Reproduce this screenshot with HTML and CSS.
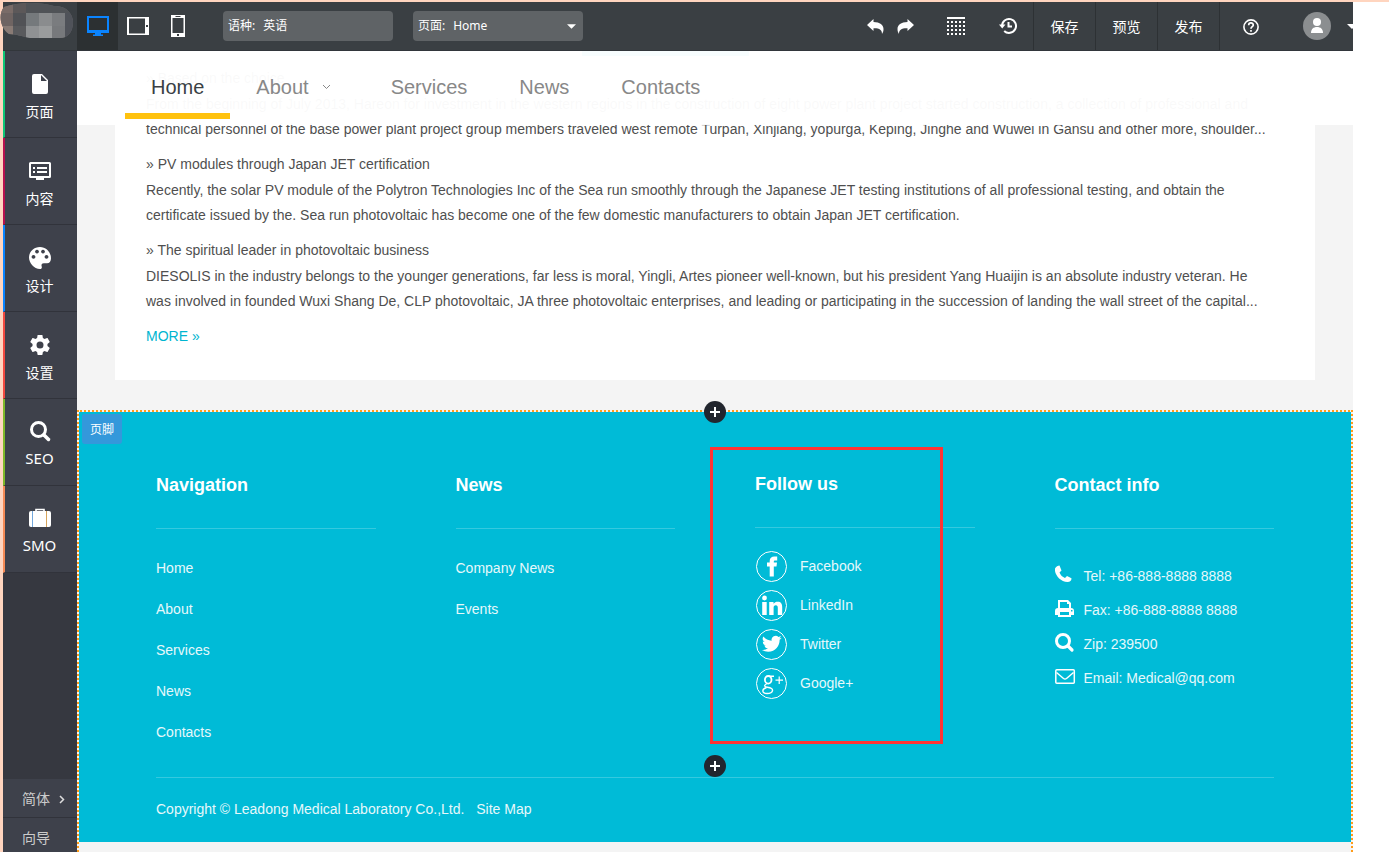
FILE: index.html
```html
<!DOCTYPE html>
<html lang="en">
<head>
<meta charset="utf-8">
<title>Site editor</title>
<link rel="stylesheet" href="styles.css">
</head>
<body>
<div class="app">
  <header class="topbar">
    <div class="logo">
      <svg width="78" height="40" viewBox="0 0 78 40" aria-hidden="true">
        <defs><clipPath id="blob"><path d="M4 5C18 0 40 0 54 4C66 3 73 12 73 20C73 30 68 36 60 36H30C24 35 16 32 9 32C0 26 -2 12 4 5Z"/></clipPath></defs>
        <g clip-path="url(#blob)">
          <path fill="#69676a" d="M0 0h78v40H0z"/>
          <path fill="#7a6c68" d="M0 0h13v11H0z"/><path fill="#5c5859" d="M13 0h13v11H13z"/><path fill="#505357" d="M26 0h52v11H26z"/>
          <path fill="#6f6462" d="M0 11h13v13H0z"/><path fill="#515256" d="M13 11h13v13H13z"/>
          <path fill="#75797c" d="M26 11h13v13H26z"/><path fill="#8a8c8e" d="M39 11h13v13H39z"/><path fill="#7a7c7f" d="M52 11h13v13H52z"/><path fill="#4f5259" d="M65 11h13v27H65z"/>
          <path fill="#897b75" d="M0 24h13v15H0z"/><path fill="#595a5d" d="M13 24h13v15H13z"/><path fill="#8f9193" d="M26 24h13v15H26z"/><path fill="#9a9c9d" d="M39 24h13v15H39z"/><path fill="#77797c" d="M52 24h13v15H52z"/>
        </g>
      </svg>
    </div>
    <div class="devices">
      <button class="device device-active" aria-label="Desktop">
        <svg width="22" height="20" viewBox="0 0 22 20"><path fill="#0a84ff" fill-rule="evenodd" d="M0 0h22v17h-8v1.500h2V20H6v-1.500h2V17H0zM2 2v12h18V2z"/></svg>
      </button>
      <button class="device" aria-label="Tablet">
        <svg width="22" height="18" viewBox="0 0 22 18"><path fill="#fff" fill-rule="evenodd" d="M0 0h22v18H0zM2 1.500v15h16v-15zM19 8v2h2V8z"/></svg>
      </button>
      <button class="device" aria-label="Phone">
        <svg width="14" height="22" viewBox="0 0 14 22"><path fill="#fff" fill-rule="evenodd" d="M0 0h14v22H0zM1.500 3v15h11V3zM4.500 1v1h5V1zM6 19v2h2v-2z"/></svg>
      </button>
    </div>
    <div class="pickers">
      <label class="picker"><span>语种:</span><select><option>英语</option></select></label>
      <label class="picker"><span>页面:</span><select><option>Home</option></select><svg class="picker-caret" width="9" height="5" viewBox="0 0 10 5"><path fill="#fff" d="M0 0h10L5 5z"/></svg></label>
    </div>
    <div class="tools">
      <button class="tool tool-history" aria-label="Undo"><svg width="17" height="15" viewBox="0 0 17 15"><path fill="#fff" d="M6.500 0v3C13 3 16.500 6 16.500 10c0 2-.5 3.500-1.500 5 .2-4-2.500-6-8.500-5.800V12L0 6z"/></svg></button>
      <button class="tool tool-history" aria-label="Redo"><svg width="17" height="15" viewBox="0 0 17 15"><path fill="#fff" d="M10.500 0v3C4 3 .5 6 .5 10c0 2 .5 3.500 1.500 5-.2-4 2.500-6 8.500-5.800V12L17 6z"/></svg></button>
      <button class="tool tool-grid" aria-label="Grid"><svg width="18" height="18" viewBox="0 0 18 18"><path stroke="#fff" stroke-width="2" d="M0 1h18"/><path stroke="#fff" stroke-width="2" stroke-dasharray="2 2" d="M0 5h18M0 9h18M0 13h18M0 17h18"/></svg></button>
      <button class="tool tool-recent" aria-label="History"><svg width="18" height="18" viewBox="0 0 18 18" fill="none" stroke="#fff" stroke-width="2"><path d="M3 9a7 7 0 1 1 2.200 5"/><path d="M9.500 5v4.500H13"/><path fill="#fff" stroke="none" d="M0 7.500h6.500L3.200 11.500z"/></svg></button>
      <button class="action">保存</button>
      <button class="action">预览</button>
      <button class="action">发布</button>
      <button class="action" aria-label="Help"><svg width="16" height="16" viewBox="0 0 16 16" fill="none" stroke="#fff"><circle cx="8" cy="8" r="7.100" stroke-width="1.600"/><path stroke-width="1.700" d="M5.700 6.200C5.700 3.200 10.300 3.300 10.300 6c0 1.700-2.300 1.700-2.300 3.700M8 11v1.700"/></svg></button>
      <button class="account" aria-label="Account"><svg width="28" height="28" viewBox="0 0 28 28"><circle cx="14" cy="14" r="14" fill="#8b8e90"/><circle cx="14" cy="10" r="4" fill="#fff"/><path fill="#fff" d="M8 21c0-4 2.500-6 6-6s6 2 6 6z"/></svg><svg class="account-caret" width="10" height="5" viewBox="0 0 10 5"><path fill="#fff" d="M0 0h10L5 5z"/></svg></button>
    </div>
  </header>

  <div class="workspace">
    <aside class="sidebar">
      <button class="side-item green"><svg width="22" height="24" viewBox="0 0 22 24"><path fill="#fff" fill-rule="evenodd" d="M5 2h8l6 6v12q0 2-2 2H5q-2 0-2-2V4q0-2 2-2zM12 3v6h6z"/></svg><span>页面</span></button>
      <button class="side-item crimson"><svg width="22" height="24" viewBox="0 0 22 24"><path fill="#fff" fill-rule="evenodd" d="M1.500 3h19Q22 3 22 4.500v13q0 1.500-1.500 1.500H15v2H7v-2H1.500Q0 19 0 17.500v-13Q0 3 1.500 3zM2 5v12h18V5zM4 8h2v2H4zM8 8h10v2H8zM4 12h2v2H4zM8 12h10v2H8z"/></svg><span>内容</span></button>
      <button class="side-item blue"><svg width="22" height="24" viewBox="0 0 22 24"><path fill="#fff" fill-rule="evenodd" d="M11 1C4.500 1 0 6 0 11.500S5 23 11 23c1.500 0 2-1 1.800-2.300-.8-2 0-3.500 2-3.500H18c2.500 0 4-2 4-5C22 6 17 1 11 1zM4.500 9a1.900 1.900 0 1 0 .01 0zM8 3.700a1.900 1.900 0 1 0 .01 0zM14 3.700a1.900 1.900 0 1 0 .01 0zM17.500 9a1.900 1.900 0 1 0 .01 0z"/></svg><span>设计</span></button>
      <button class="side-item red"><svg width="24" height="24" viewBox="0 0 24 24"><path fill="#fff" d="M19.430 12.980c.04-.32.07-.64.07-.98s-.03-.66-.07-.98l2.110-1.650c.19-.15.24-.42.12-.64l-2-3.460c-.12-.22-.39-.3-.61-.22l-2.490 1c-.52-.4-1.080-.73-1.690-.98l-.38-2.650C14.460 2.180 14.250 2 14 2h-4c-.25 0-.46.18-.49.42l-.38 2.650c-.61.25-1.170.59-1.690.98l-2.490-1c-.23-.09-.49 0-.61.22l-2 3.460c-.13.22-.07.49.12.64l2.110 1.650c-.04.32-.07.65-.07.98s.03.66.07.98l-2.110 1.650c-.19.15-.24.42-.12.64l2 3.460c.12.22.39.3.61.22l2.490-1c.52.4 1.080.73 1.690.98l.38 2.650c.03.24.24.42.49.42h4c.25 0 .46-.18.49-.42l.38-2.650c.61-.25 1.170-.59 1.690-.98l2.490 1c.23.09.49 0 .61-.22l2-3.460c.12-.22.07-.49-.12-.64zM12 15.500a3.500 3.500 0 1 1 0-7 3.500 3.500 0 0 1 0 7z"/></svg><span>设置</span></button>
      <button class="side-item latin olive"><svg width="22" height="22" viewBox="0 0 22 22" fill="none" stroke="#fff"><circle cx="9.500" cy="9.500" r="7" stroke-width="3"/><path stroke-width="3.500" stroke-linecap="round" d="m15 15 4.500 4.500"/></svg><span>SEO</span></button>
      <button class="side-item latin orange"><svg width="22" height="22" viewBox="0 0 22 22"><path fill="none" stroke="#fff" stroke-width="1.600" d="M7 5V2.500h8V5"/><rect y="4" width="22" height="16" rx="2" fill="#fff"/><path stroke="#72a7dc" d="M3.500 4v16"/><path stroke="#d7a45c" d="M17.500 4v16"/></svg><span>SMO</span></button>
      <div class="side-bottom">
        <button class="side-link">简体<svg width="6" height="9" viewBox="0 0 6 9"><path fill="none" stroke="#ddd" stroke-width="1.500" d="m1 1 3.500 3.500L1 8"/></svg></button>
        <button class="side-link">向导</button>
      </div>
    </aside>

    <main class="canvas">
      <nav class="site-nav">
        <a class="nav-current" href="#">Home</a>
        <a class="nav-menu" href="#">About<svg width="9" height="6" viewBox="0 0 9 6"><path fill="none" stroke="#888" d="m1 1 3.500 3.500L8 1"/></svg></a>
        <a href="#">Services</a>
        <a href="#">News</a>
        <a href="#">Contacts</a>
      </nav>
      <section class="article-card">
        <div class="accent-bar"></div>
        <h3>» Based on the choice</h3>
        <p>From the beginning of July 2013, Hareon for investment in the western regions in the construction of eight power plant project started construction, a collection of professional and<br>technical personnel of the base power plant project group members traveled west remote Turpan, Xinjiang, yopurga, Keping, Jinghe and Wuwei in Gansu and other more, shoulder...</p>
        <h3>» PV modules through Japan JET certification</h3>
        <p>Recently, the solar PV module of the Polytron Technologies Inc of the Sea run smoothly through the Japanese JET testing institutions of all professional testing, and obtain the<br>certificate issued by the. Sea run photovoltaic has become one of the few domestic manufacturers to obtain Japan JET certification.</p>
        <h3>» The spiritual leader in photovoltaic business</h3>
        <p>DIESOLIS in the industry belongs to the younger generations, far less is moral, Yingli, Artes pioneer well-known, but his president Yang Huaijin is an absolute industry veteran. He<br>was involved in founded Wuxi Shang De, CLP photovoltaic, JA three photovoltaic enterprises, and leading or participating in the succession of landing the wall street of the capital...</p>
        <a class="more" href="#">MORE »</a>
      </section>

      <div class="footer-frame">
        <span class="frame-tag">页脚</span>
        <button class="add add-top" aria-label="Add above"><svg width="12" height="12" viewBox="0 0 12 12"><path stroke="#fff" stroke-width="2" d="M6 1v10M1 6h10"/></svg></button>
        <button class="add add-bottom" aria-label="Add below"><svg width="12" height="12" viewBox="0 0 12 12"><path stroke="#fff" stroke-width="2" d="M6 1v10M1 6h10"/></svg></button>
        <div class="highlight"></div>
        <footer class="site-footer">
          <div class="columns">
            <section>
              <h2>Navigation</h2>
              <ul class="links">
                <li><a href="#">Home</a></li><li><a href="#">About</a></li><li><a href="#">Services</a></li><li><a href="#">News</a></li><li><a href="#">Contacts</a></li>
              </ul>
            </section>
            <section>
              <h2>News</h2>
              <ul class="links">
                <li><a href="#">Company News</a></li><li><a href="#">Events</a></li>
              </ul>
            </section>
            <section class="follow">
              <h2>Follow us</h2>
              <ul class="social">
                <li><a href="#"><svg width="33" height="33" viewBox="0 0 33 33"><circle cx="16.500" cy="16.500" r="15" fill="none" stroke="#fff"/><path fill="#fff" d="M14.700 26.500v-10h-2.700v-4h2.700V11c0-3 1.800-4.500 4.800-4.500h2.700v4h-2c-1 0-1.400.4-1.400 1.300v.7h3.200l-.5 4h-2.700v10z"/></svg>Facebook</a></li>
                <li><a href="#"><svg width="33" height="33" viewBox="0 0 33 33"><circle cx="16.500" cy="16.500" r="15" fill="none" stroke="#fff"/><circle cx="9.500" cy="9" r="2.400" fill="#fff"/><path fill="#fff" d="M7.200 13h4.500v13H7.200zM14.200 13h4.300v1.800c1-1.500 2.400-2.100 4.200-2.100 3.300 0 4.500 2 4.500 5.600V26h-4.400v-7c0-1.700-.5-2.700-2-2.700-1.600 0-2.200 1.100-2.200 2.700v7h-4.400z"/></svg>LinkedIn</a></li>
                <li><a href="#"><svg width="33" height="33" viewBox="0 0 33 33"><circle cx="16.500" cy="16.500" r="15" fill="none" stroke="#fff"/><path fill="#fff" transform="translate(7 5.600) scale(.83)" d="M23.640 4.940a9.700 9.700 0 0 1-2.790.76 4.870 4.870 0 0 0 2.130-2.680 9.700 9.700 0 0 1-3.080 1.170 4.850 4.850 0 0 0-8.260 4.420A13.760 13.760 0 0 1 1.640 3.550a4.850 4.850 0 0 0 1.500 6.470 4.800 4.800 0 0 1-2.190-.6v.06a4.850 4.850 0 0 0 3.890 4.750 4.900 4.900 0 0 1-2.190.08 4.850 4.850 0 0 0 4.530 3.370A9.720 9.720 0 0 1 0 19.690a13.720 13.720 0 0 0 7.430 2.180c8.920 0 13.790-7.390 13.790-13.790l-.01-.63a9.860 9.860 0 0 0 2.430-2.510z"/></svg>Twitter</a></li>
                <li><a href="#"><svg width="33" height="33" viewBox="0 0 33 33" fill="none" stroke="#fff"><circle cx="16.500" cy="16.500" r="15"/><ellipse cx="13.200" cy="12.800" rx="3.300" ry="3.800" stroke-width="1.800"/><path stroke-width="1.400" d="M14 9.200h5M12 16.500c-3.500 1.800-3 3.400.5 3.700 7.500.7 6 6.300-.5 6.300-5.500 0-5.500-4.500-.5-6"/><path stroke-width="1.200" d="M24.200 9.500v7.500M20.500 13.200h7.500"/></svg>Google+</a></li>
              </ul>
            </section>
            <section>
              <h2>Contact info</h2>
              <ul class="contact">
                <li><svg width="22" height="22" viewBox="0 0 22 22"><path fill="#fff" d="M0 3.500C1 1.500 3 .5 4.500.5l2 5L4.500 7.500c1 2.700 3 4.500 5.500 5.500l2-2 4.500 2.300c0 2.500-1.500 3.700-4 3.700C5 17-1 9 0 3.500z"/></svg>Tel: +86-888-8888 8888</li>
                <li><svg width="22" height="22" viewBox="0 0 22 22"><path fill="#fff" fill-rule="evenodd" d="M3 1h10l3 3v5q3 0 3 3v4h-3v2H3v-2H0v-4q0-3 3-3zM5 3v6h9V5h-2V3zM5 13v3h9v-3zM16 11h1.500v1.500H16z"/></svg>Fax: +86-888-8888 8888</li>
                <li><svg width="22" height="22" viewBox="0 0 22 22" fill="none" stroke="#fff"><circle cx="8" cy="8" r="6.500" stroke-width="3"/><path stroke-width="3.200" stroke-linecap="round" d="m13 13 4 4"/></svg>Zip: 239500</li>
                <li><svg width="22" height="22" viewBox="0 0 22 22" fill="none" stroke="#fff" stroke-width="1.500"><rect x=".8" y="2.800" width="18.500" height="13.500" rx="1"/><path d="m1.500 5.500 7 6q1.500 1 3 0l7-6"/></svg>Email: Medical@qq.com</li>
              </ul>
            </section>
          </div>
          <div class="legal">Copyright © Leadong Medical Laboratory Co.,Ltd. <a href="#">Site Map</a></div>
        </footer>
      </div>
    </main>
  </div>
</div>
</body>
</html>
```

FILE: styles.css
```css
* { box-sizing: border-box; }
body {
  margin: 0;
  height: 100vh;
  overflow: hidden;
  border-top: 2px solid #ffd5bf;
  background: #fff;
  font: 14px/25px "Liberation Sans", Arial, sans-serif;
  color: #4f4f4f;
}
a { color: inherit; text-decoration: none; }
button { border: 0; padding: 0; background: none; color: inherit; font: inherit; }
ul { list-style: none; margin: 0; padding: 0; }
svg { display: block; flex: none; }

.app {
  display: flex;
  flex-direction: column;
  height: 100%;
  margin-right: 36px;
  border-left: 3px solid #ffd5bf;
}

/* Editor top bar */
.topbar {
  display: flex;
  flex: none;
  height: 49px;
  background: #3a3f43;
  border-bottom: 1px solid #32363b;
  color: #fff;
  font: 13px/20px "Noto Sans", "Noto Sans CJK SC", sans-serif;
}
.logo { width: 74px; flex: none; }
.logo svg { margin-left: -3px; }
.devices { display: flex; }
.device { display: flex; align-items: center; justify-content: center; width: 40px; }
.device-active { width: 41px; background: #2c3032; }
.pickers { display: flex; align-items: center; gap: 20px; margin-left: 25px; }
.picker {
  display: flex;
  align-items: center;
  gap: 8px;
  width: 170px;
  height: 30px;
  padding: 0 7px 0 5px;
  border-radius: 4px;
  background: #5f6366;
  font-size: 12px;
}
.picker select {
  flex: 1;
  min-width: 0;
  padding: 0;
  border: 0;
  appearance: none;
  background: none;
  color: inherit;
  font: inherit;
}
.picker-caret { pointer-events: none; }
.tools { display: flex; margin-left: auto; overflow: hidden; }
.tool { display: flex; align-items: center; justify-content: center; }
.tool-history { width: 30px; }
.tool-grid { width: 52px; margin-left: 10px; }
.tool-recent { width: 51px; }
.action {
  display: flex;
  align-items: center;
  justify-content: center;
  width: 62px;
  padding-top: 1px;
  border-left: 1px solid #2d3134;
  font-size: 14px;
}
.account { display: flex; align-items: center; gap: 16px; width: 50px; margin-left: 22px; }

/* Sidebar */
.workspace { display: flex; flex: 1; min-height: 0; }
.sidebar {
  display: flex;
  flex: none;
  flex-direction: column;
  width: 74px;
  background: #363840;
  color: #fff;
  font: 14px/20px "Noto Sans", "Noto Sans CJK SC", sans-serif;
}
.side-item {
  display: flex;
  flex: none;
  flex-direction: column;
  align-items: center;
  justify-content: center;
  gap: 6px;
  height: 87px;
  padding: 5px 3px 0 0;
  border-left: 2px solid;
  border-bottom: 1px solid #31333b;
  background: #3e414b;
}
.side-item span { color: #fff; }
.latin { padding-top: 3px; font-size: 15px; }
.green { border-left-color: #0ec776; }
.crimson { border-left-color: #b80f4d; }
.blue { border-left-color: #0a84ff; }
.red { border-left-color: #f2493f; }
.olive { border-left-color: #7eb828; }
.orange { border-left-color: #f58a55; }
.side-bottom { margin-top: auto; margin-bottom: -5px; background: #3e414b; color: #ccc; }
.side-link {
  display: flex;
  align-items: center;
  gap: 9px;
  width: 100%;
  height: 39px;
  padding: 2px 0 0 19px;
  border-bottom: 1px solid #31333b;
}

/* Edited page */
.canvas {
  position: relative;
  display: flex;
  flex: 1;
  flex-direction: column;
  min-width: 0;
  overflow: hidden;
  background: #f4f4f4;
}
.site-nav {
  position: absolute;
  inset: 0 0 auto;
  display: flex;
  height: 74px;
  padding-left: 48px;
  background: rgba(255, 255, 255, .97);
  color: #888;
  font-size: 20px;
}
.site-nav a {
  display: flex;
  align-items: center;
  gap: 13px;
  height: 68px;
  padding: 10px 26px 0;
  border-bottom: 6px solid transparent;
}
.site-nav .nav-current { border-color: #ffc20e; color: #3a3f45; }
.site-nav .nav-menu { padding-right: 34px; }
.article-card { margin: 0 38px; padding: 0 31px 31px; background: #fff; }
.accent-bar { width: 167px; height: 5px; margin-left: 436px; background: #00bcd8; }
.article-card h3 { margin: 10px 0 1px; font-size: 14px; font-weight: 400; line-height: 25px; }
.article-card p { margin: 0; }
.more { display: block; margin-top: 10px; color: #00b5d0; }

/* Footer */
.footer-frame {
  position: relative;
  flex: 1;
  margin-top: 30px;
  border: 2px dotted #ff9c1a;
  border-bottom: 0;
}
.frame-tag {
  position: absolute;
  top: 2px;
  left: 3px;
  padding: 0 8px;
  border-radius: 3px;
  background: #3498db;
  color: #fff;
  font: 12px/30px "Noto Sans CJK SC", sans-serif;
}
.add {
  position: absolute;
  left: 50%;
  display: flex;
  align-items: center;
  justify-content: center;
  width: 22px;
  height: 22px;
  margin-left: -11px;
  border-radius: 50%;
  background: #22262e;
}
.add-top { top: -11px; }
.add-bottom { top: 343px; }
.highlight {
  position: absolute;
  top: 35px;
  left: 50%;
  width: 233px;
  height: 297px;
  margin-left: -5px;
  border: 3px solid #ff3333;
  pointer-events: none;
}
.site-footer { padding: 60px 77px 0; background: #00bbd7; color: #e6f8fb; }
.columns { display: grid; grid-template-columns: repeat(4, 1fr); gap: 80px; padding-bottom: 24px; }
.columns h2 {
  margin: 0;
  padding-bottom: 30px;
  border-bottom: 1px solid #35c9df;
  color: #fff;
  font-size: 18px;
  line-height: 26px;
}
.links { margin-top: 19px; }
.links li { line-height: 41px; }
.follow { margin-top: -1px; }
.social { margin-top: 19px; }
.social a { display: flex; align-items: center; gap: 12px; height: 39px; }
.contact { margin-top: 30px; }
.contact li { display: flex; align-items: center; gap: 7px; height: 34px; }
.legal { padding-bottom: 2px; border-top: 1px solid #35c9df; line-height: 62px; }
.legal a { margin-left: 8px; }
```
